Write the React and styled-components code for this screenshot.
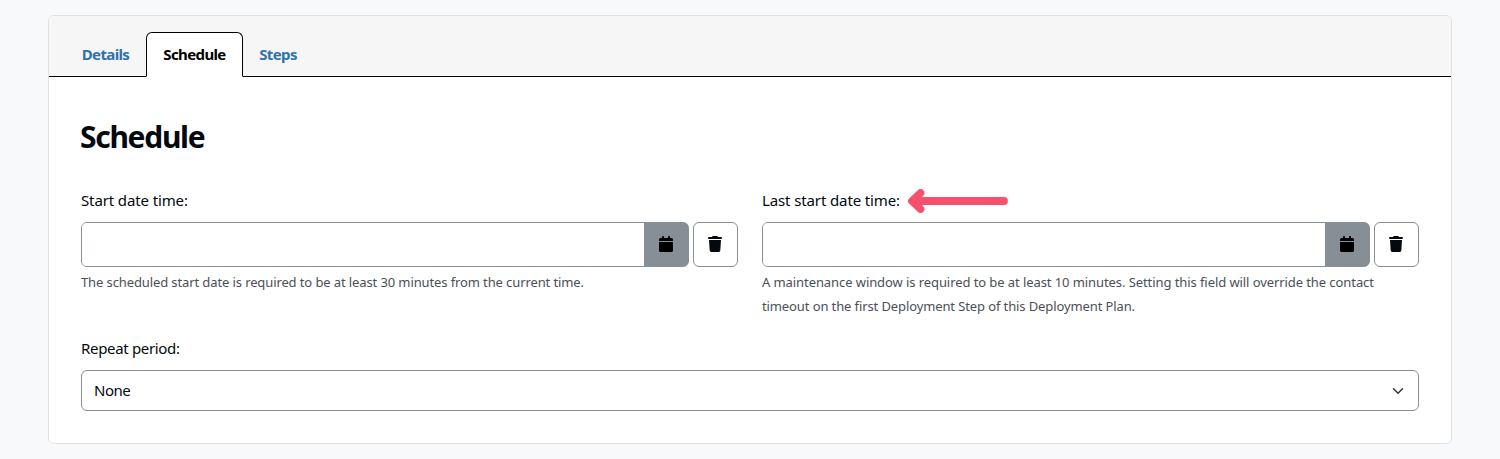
import React from "react";
import styled, { createGlobalStyle } from "styled-components";

const GlobalStyle = createGlobalStyle`
  *, *::before, *::after { box-sizing: border-box; }
  body {
    margin: 0;
    background: #f8f9fb;
    color: #03090e;
    font-family: "Noto Sans", "Open Sans", sans-serif;
    font-size: 15px;
    line-height: 24px;
    letter-spacing: -0.12px;
  }
`;

const Page = styled.main`
  padding: 15px 48px;
`;

const Card = styled.section`
  height: 429px;
  background: #fff;
  border: 1px solid #dfe1e5;
  border-radius: 6px;
  overflow: hidden;
`;

const TabBar = styled.nav`
  display: flex;
  height: 61px;
  padding: 16px 16px 0;
  background: #f6f6f6;
  border-bottom: 1px solid #000;
`;

const Tab = styled.a`
  display: flex;
  align-items: center;
  justify-content: center;
  width: ${(p) => p.$width}px;
  height: 45px;
  padding-bottom: 2px;
  border: 1px solid ${(p) => (p.$active ? "#000" : "transparent")};
  border-bottom-color: ${(p) => (p.$active ? "#fff" : "transparent")};
  border-radius: 6px 6px 0 0;
  background: ${(p) => (p.$active ? "#fff" : "transparent")};
  color: ${(p) => (p.$active ? "#000" : "#2c73b0")};
  font-weight: 700;
  letter-spacing: -0.62px;
  text-decoration: none;
`;

const Body = styled.form`
  padding: 40px 32px 32px;
`;

const Title = styled.h1`
  margin: 0 0 32px -1px;
  font-size: 30px;
  line-height: 40px;
  font-weight: 700;
  letter-spacing: -1.3px;
`;

const Columns = styled.div`
  display: grid;
  grid-template-columns: 657px 657px;
  gap: 24px;
  margin-bottom: 19px;
`;

const Label = styled.label`
  display: flex;
  align-items: center;
  gap: 8px;
  height: 24px;
  margin-bottom: 9px;
  letter-spacing: ${(p) => p.$tracking ?? -0.12}px;
  white-space: nowrap;
`;

const LabelText = styled.span`
  padding-bottom: 2px;
`;

const InputRow = styled.div`
  display: flex;
  gap: 4px;
  height: 45px;
  margin-bottom: 3px;
`;

const InputGroup = styled.div`
  display: flex;
  flex: 1;
  border: 1px solid #868e96;
  border-radius: 6px;
  background: linear-gradient(to right, #fff 80%, #868e96 80%);
  overflow: hidden;
`;

const Input = styled.input`
  flex: 1;
  min-width: 0;
  padding: 0 12px;
  border: 0;
  outline: 0;
  background: #fff;
  font: inherit;
`;

const IconButton = styled.button`
  display: flex;
  align-items: center;
  justify-content: center;
  width: ${(p) => (p.$filled ? 44 : 45)}px;
  padding: ${(p) => (p.$filled ? "0 0 1px" : "0 1px 2px 0")};
  border: ${(p) => (p.$filled ? "0" : "1px solid #868e96")};
  border-radius: ${(p) => (p.$filled ? "0" : "6px")};
  background: ${(p) => (p.$filled ? "#868e96" : "#fff")};
  color: ${(p) => (p.$filled ? "#000" : "#03090e")};
`;

const Glyph = styled.svg`
  display: block;
  flex: none;
  fill: currentColor;
`;

const Help = styled.p`
  margin: 0;
  color: #495057;
  font-size: 13px;
  line-height: 24px;
  letter-spacing: ${(p) => p.$tracking}px;
  white-space: nowrap;
`;

const Select = styled.div`
  display: flex;
  align-items: center;
  justify-content: space-between;
  height: 41px;
  padding: 0 12px;
  border: 1px solid #868e96;
  border-radius: 6px;
  background: #fff;
  color: #03090e;
  letter-spacing: -0.5px;
`;

const CalendarIcon = () => (
  <Glyph width="14" height="16" viewBox="0 0 14 16">
    <path d="M3 1a1 1 0 0 1 2 0v1h4V1a1 1 0 0 1 2 0v1h1.500A1.500 1.500 0 0 1 14 3.500V5H0V3.500A1.500 1.500 0 0 1 1.500 2H3zM0 6h14v8.500a1.500 1.500 0 0 1-1.500 1.500h-11A1.500 1.500 0 0 1 0 14.500z" />
  </Glyph>
);

const TrashIcon = () => (
  <Glyph width="14" height="16" viewBox="0 0 14 16">
    <path d="M4.200.6Q4.500 0 5.100 0h3.800q.6 0 .9.600L10 1h3a1 1 0 0 1 0 2H1a1 1 0 0 1 0-2h3zM1 4h12l-.7 10.600A1.500 1.500 0 0 1 10.800 16H3.200a1.500 1.500 0 0 1-1.500-1.400z" />
  </Glyph>
);

const Arrow = () => (
  <Glyph width="100" height="24" viewBox="0 0 100 24">
    <path
      d="M96 12H5M12.500 4L4 12L12.500 20"
      fill="none"
      stroke="#f5516c"
      strokeWidth="7.800"
      strokeLinecap="round"
      strokeLinejoin="round"
    />
  </Glyph>
);

const Chevron = () => (
  <Glyph width="16" height="12" viewBox="0 0 16 16">
    <path
      d="m2 5 6 6 6-6"
      fill="none"
      stroke="#343a40"
      strokeWidth="2"
      strokeLinecap="round"
      strokeLinejoin="round"
    />
  </Glyph>
);

const DateField = ({ id, label, marked, children }) => (
  <div>
    <Label htmlFor={id}>
      <LabelText>{label}</LabelText>
      {marked && <Arrow />}
    </Label>
    <InputRow>
      <InputGroup>
        <Input id={id} />
        <IconButton type="button" $filled aria-label="Pick date">
          <CalendarIcon />
        </IconButton>
      </InputGroup>
      <IconButton type="button" aria-label="Clear date">
        <TrashIcon />
      </IconButton>
    </InputRow>
    {children}
  </div>
);

export default function App() {
  return (
    <>
      <GlobalStyle />
      <Page>
        <Card>
          <TabBar>
            <Tab $width={81}>Details</Tab>
            <Tab $width={97} $active>Schedule</Tab>
            <Tab $width={70}>Steps</Tab>
          </TabBar>
          <Body>
            <Title>Schedule</Title>
            <Columns>
              <DateField id="start" label="Start date time:">
                <Help $tracking={-0.11}>
                  The scheduled start date is required to be at least 30 minutes from the current time.
                </Help>
              </DateField>
              <DateField id="last-start" label="Last start date time:" marked>
                <Help $tracking={-0.08}>
                  A maintenance window is required to be at least 10 minutes. Setting this field will override the contact
                </Help>
                <Help $tracking={-0.11}>
                  timeout on the first Deployment Step of this Deployment Plan.
                </Help>
              </DateField>
            </Columns>
            <Label as="div" $tracking={-0.33}>
              <LabelText>Repeat period:</LabelText>
            </Label>
            <Select>
              <LabelText>None</LabelText>
              <Chevron />
            </Select>
          </Body>
        </Card>
      </Page>
    </>
  );
}
